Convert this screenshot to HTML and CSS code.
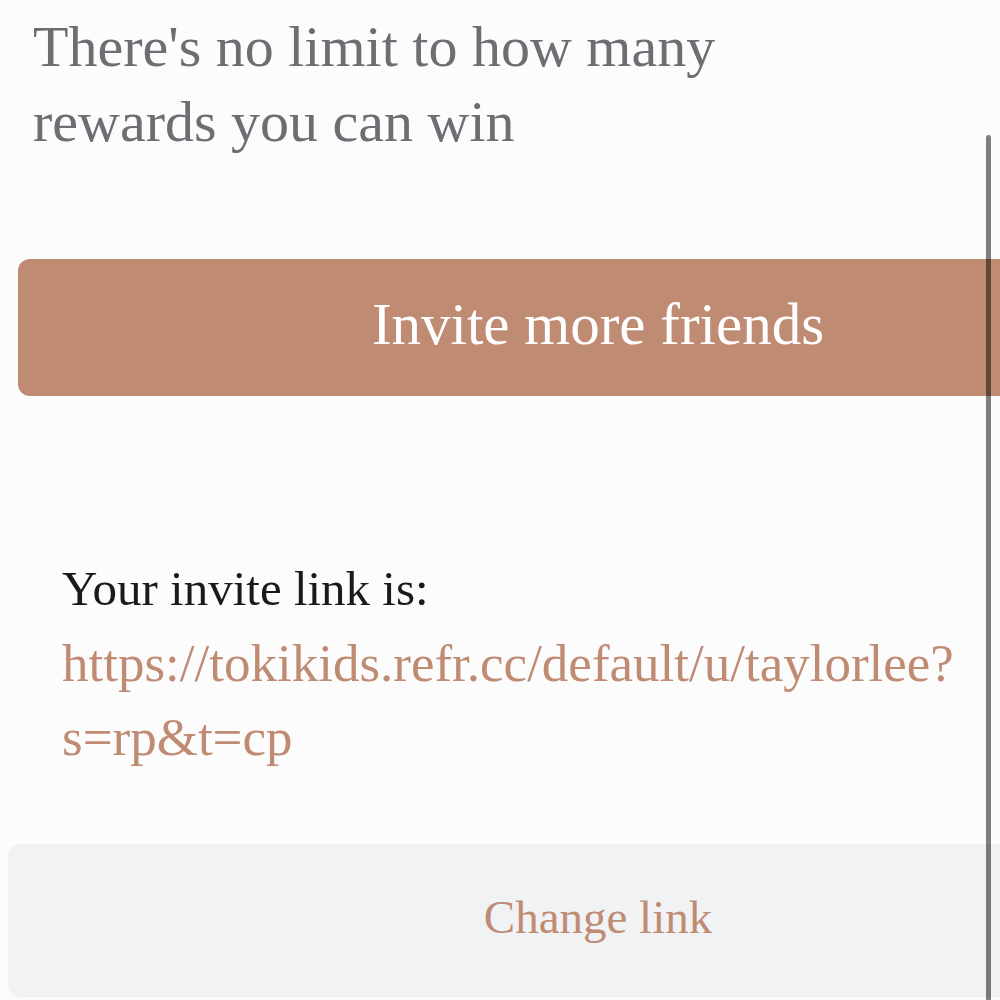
FILE: index.html
```html
<!DOCTYPE html>
<html lang="en">
<head>
<meta charset="utf-8">
<title>Invite friends</title>
<link rel="stylesheet" href="styles.css">
</head>
<body>
<div class="page">
  <h2 class="headline">There's no limit to how many rewards you can win</h2>
  <button class="btn-invite" type="button">Invite more friends</button>
  <div class="link-block">
    <p class="link-label">Your invite link is:</p>
    <a class="link-url" href="#">https://tokikids.refr.cc/default/u/taylorlee?<br>s=rp&amp;t=cp</a>
  </div>
  <button class="btn-change" type="button">Change link</button>
</div>
<div class="scrollbar"></div>
</body>
</html>
```

FILE: styles.css
```css
html, body {
  margin: 0;
  padding: 0;
  background: #fcfcfc;
  overflow: hidden;
  height: 1000px;
}

.page {
  width: 1196px;
  font-family: "Liberation Serif", "Times New Roman", serif;
  display: flex;
  flex-direction: column;
  align-items: stretch;
}

.headline {
  margin: 9px 0 0 0;
  padding: 0 0 0 33px;
  width: 740px;
  font-size: 58px;
  line-height: 75px;
  font-weight: normal;
  color: #6b6e73;
}

.btn-invite {
  margin: 100px 18px 0 18px;
  height: 137px;
  border: none;
  border-radius: 12px;
  background: #c08b73;
  color: #ffffff;
  font-family: inherit;
  font-size: 59px;
  line-height: 1;
  display: flex;
  align-items: center;
  justify-content: center;
  padding: 0 0 7px 0;
}

.link-block {
  margin: 155px 0 0 0;
  padding: 0 0 0 62px;
}

.link-label {
  margin: 0;
  font-size: 49px;
  line-height: 75px;
  color: #1a1a1a;
}

.link-url {
  display: block;
  font-size: 53px;
  line-height: 74px;
  color: #c08b73;
  text-decoration: none;
}

.btn-change {
  margin: 70px 8px 0 8px;
  height: 153px;
  border: none;
  border-radius: 12px;
  background: #f1f2f4;
  color: #c08b73;
  font-family: inherit;
  font-size: 47px;
  line-height: 1;
  display: flex;
  align-items: center;
  justify-content: center;
  padding: 0 0 6px 0;
}

.scrollbar {
  position: absolute;
  left: 986px;
  top: 135px;
  width: 5px;
  height: 880px;
  border-radius: 3px;
  background: rgba(0, 0, 0, 0.5);
}
```
